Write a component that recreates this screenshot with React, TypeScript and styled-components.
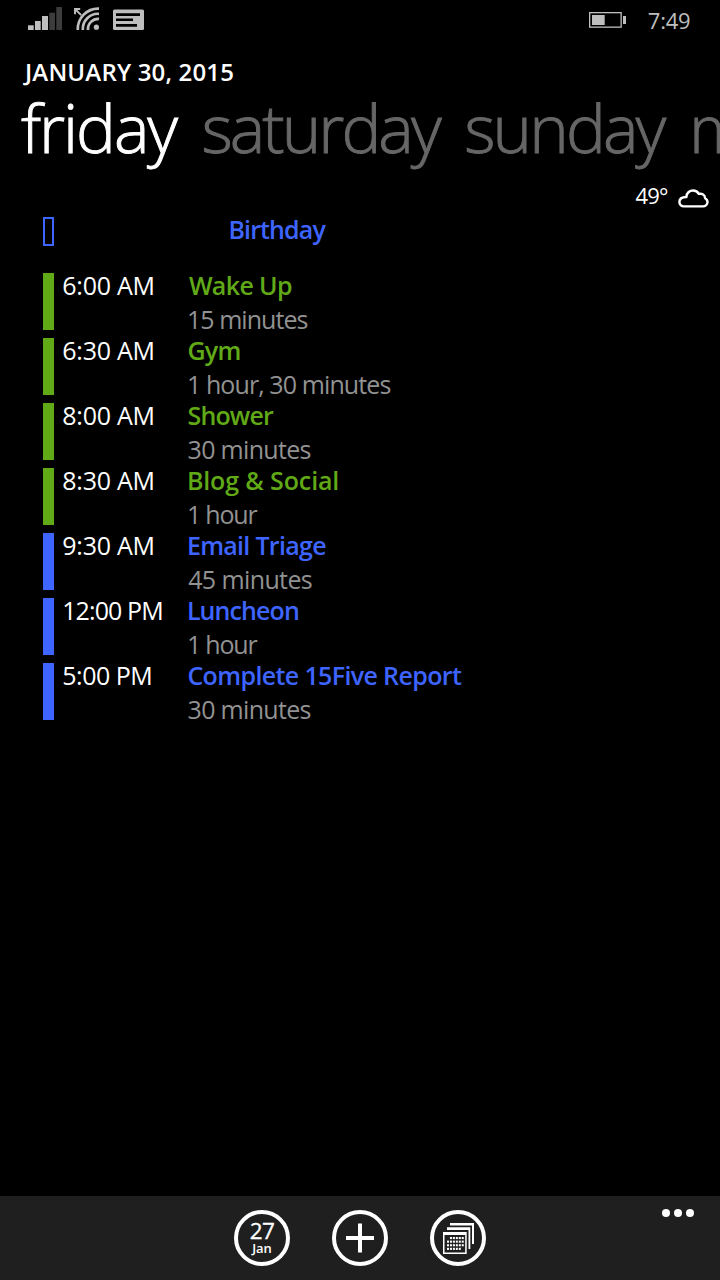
import React from "react";
import styled, { createGlobalStyle } from "styled-components";

const GREEN = "#60a917";
const BLUE = "#3e65ff";
const STATUS = "#bebebe";

const GlobalStyle = createGlobalStyle`
  * { box-sizing: border-box; }
  body {
    margin: 0;
    background: #000;
    color: #fff;
    font-family: "Open Sans", "Noto Sans", sans-serif;
  }
`;

const Screen = styled.div`
  width: 720px;
  height: 1280px;
  display: flex;
  flex-direction: column;
  overflow: hidden;
  background: #000;
`;

const StatusBar = styled.header`
  display: flex;
  justify-content: space-between;
  height: 40px;
  padding: 0 29.5px 0 28px;
  color: ${STATUS};
`;

const StatusGroup = styled.div<{ $gap: number }>`
  display: flex;
  gap: ${(p) => p.$gap}px;
  svg { display: block; }
`;

const Clock = styled.span`
  font-size: 22px;
  line-height: 40px;
  letter-spacing: -0.2px;
`;

const DateLine = styled.div`
  margin-top: 16px;
  padding-left: 25px;
  font-size: 24px;
  font-weight: 600;
  line-height: 31px;
  letter-spacing: 0.17px;
`;

const Days = styled.nav`
  display: flex;
  gap: 25.5px;
  height: 80px;
  padding-left: 21px;
`;

const Day = styled.span<{ $active?: boolean; $tracking: number }>`
  flex: none;
  font-size: 67px;
  font-weight: 300;
  line-height: 80px;
  white-space: nowrap;
  letter-spacing: ${(p) => p.$tracking}px;
  color: ${(p) => (p.$active ? "#fff" : "#666")};
  -webkit-text-stroke: 0.9px ${(p) => (p.$active ? "#fff" : "#666")};
`;

const Weather = styled.div`
  display: flex;
  justify-content: flex-end;
  gap: 10.5px;
  height: 31px;
  margin-top: 13px;
  padding-right: 11px;
  font-size: 22px;
  line-height: 31px;
  letter-spacing: -0.83px;
  svg { display: block; margin-top: 9px; }
`;

const AllDay = styled.div`
  display: flex;
  height: 35px;
  margin-top: 1px;
  padding-left: 43px;
  color: ${BLUE};
`;

const AllDayGlyph = styled.span`
  width: 11px;
  height: 29px;
  margin: 5px 174.5px 0 0;
  border: 2px solid ${BLUE};
`;

const Agenda = styled.main`
  flex: 1;
  display: flex;
  flex-direction: column;
  gap: 8px;
  padding: 26px 0 0 43px;
`;

const EventRow = styled.div`
  display: grid;
  grid-template-columns: 11px 132.5px 1fr;
  grid-template-rows: 57px;
  height: 57px;
`;

const Stripe = styled.span<{ $color: string }>`
  background: ${(p) => p.$color};
`;

const Line = styled.div<{ $tracking: number; $indent?: number }>`
  padding-left: ${(p) => p.$indent ?? 0}px;
  font-size: 25px;
  line-height: 34px;
  white-space: nowrap;
  letter-spacing: ${(p) => p.$tracking}px;
`;

const Time = styled(Line)`
  margin-top: -5px;
`;

const Details = styled.div`
  margin-top: -5px;
`;

const Title = styled(Line)<{ $color: string }>`
  font-weight: 600;
  color: ${(p) => p.$color};
`;

const Duration = styled(Line)`
  color: #929292;
`;

const AppBar = styled.footer`
  display: grid;
  grid-template-columns: 1fr auto 1fr;
  height: 84px;
  background: #1f1f1f;
`;

const Actions = styled.div`
  grid-column: 2;
  display: flex;
  gap: 42px;
  padding-top: 14px;
`;

const RoundButton = styled.button`
  display: flex;
  flex-direction: column;
  align-items: center;
  justify-content: center;
  width: 56px;
  height: 56px;
  padding: 0;
  border: 4px solid #fff;
  border-radius: 50%;
  background: transparent;
  color: #fff;
  font-family: inherit;
  svg { display: block; }
`;

const TodayNumber = styled.span`
  margin-top: -2px;
  font-size: 22.5px;
  line-height: 23px;
  letter-spacing: -0.6px;
  -webkit-text-stroke: 0.3px #fff;
`;

const TodayMonth = styled.span`
  font-size: 13px;
  font-weight: 600;
  line-height: 13px;
`;

const More = styled.button`
  display: flex;
  justify-self: end;
  gap: 4px;
  height: 34px;
  padding: 13px 26.5px 0 0;
  border: 0;
  background: transparent;
`;

const Dot = styled.span`
  width: 8px;
  height: 8px;
  border-radius: 50%;
  background: #fff;
`;

type EventItem = {
  time: string;
  timeTracking: number;
  timeIndent: number;
  title: string;
  titleTracking: number;
  titleIndent: number;
  duration: string;
  durationTracking: number;
  durationIndent: number;
  color: string;
};

const event = (
  time: [string, number, number],
  title: [string, number, number],
  duration: [string, number, number],
  color: string
): EventItem => ({
  time: time[0], timeTracking: time[1], timeIndent: time[2],
  title: title[0], titleTracking: title[1], titleIndent: title[2],
  duration: duration[0], durationTracking: duration[1], durationIndent: duration[2],
  color,
});

const events: EventItem[] = [
  event(["6:00 AM", -0.25, 8.3], ["Wake Up", -0.65, 2.4], ["15 minutes", -0.94, 0.4], GREEN),
  event(["6:30 AM", -0.25, 8.3], ["Gym", -0.75, 0.9], ["1 hour, 30 minutes", -0.9, 0.4], GREEN),
  event(["8:00 AM", -0.25, 8.3], ["Shower", -0.84, 1], ["30 minutes", -0.69, 1.1], GREEN),
  event(["8:30 AM", -0.25, 8.3], ["Blog & Social", -0.12, 0.4], ["1 hour", -1.18, 0.4], GREEN),
  event(["9:30 AM", -0.25, 8.3], ["Email Triage", -0.7, 0.4], ["45 minutes", -0.61, 1.7], BLUE),
  event(["12:00 PM", -0.9, 8.2], ["Luncheon", -0.9, 0.4], ["1 hour", -1.18, 0.4], BLUE),
  event(["5:00 PM", -0.5, 8.3], ["Complete 15Five Report", -0.63, 0.9], ["30 minutes", -0.69, 1.1], BLUE),
];

const SignalIcon = () => (
  <svg width="34" height="40" viewBox="28 0 34 40">
    <g fill={STATUS}>
      <rect x="28" y="25.3" width="5.7" height="4.7" />
      <rect x="35" y="21" width="5.7" height="9" />
      <rect x="42" y="16" width="6" height="14" />
    </g>
    <g fill="#3c3c3c">
      <rect x="49.3" y="12.7" width="5.7" height="17.3" />
      <rect x="56.3" y="7" width="5.7" height="23" />
    </g>
  </svg>
);

const WifiIcon = () => (
  <svg width="27" height="40" viewBox="74 0 27 40" fill="none" stroke={STATUS}>
    <path d="M77.8 30A20.4 20.4 0 0 1 99 8.6M82.8 30A15.3 15.3 0 0 1 99 13.8M88 30A10.3 10.3 0 0 1 99 18.9" strokeWidth="2.7" />
    <circle cx="96.4" cy="27.2" r="2.6" fill={STATUS} stroke="none" />
    <path d="M80.2 9H75V14.2M75 9l6.2 6.2" strokeWidth="1.9" />
  </svg>
);

const MessageIcon = () => (
  <svg width="31" height="40" viewBox="113 0 31 40">
    <rect x="113" y="9.5" width="31" height="20.5" rx="1.5" fill={STATUS} />
    <path d="M116 13.3h24V16h-24zM116 18.4h17V21h-17zM116 24h21v2.7h-21z" fill="#000" />
  </svg>
);

const BatteryIcon = () => (
  <svg width="37" height="40" viewBox="589 0 37 40">
    <rect x="589.65" y="12.65" width="31.5" height="14.5" fill="none" stroke={STATUS} strokeWidth="1.3" />
    <rect x="592" y="15" width="12.7" height="10" fill={STATUS} />
    <rect x="623" y="16" width="3" height="8" fill={STATUS} />
  </svg>
);

const CloudIcon = () => (
  <svg width="31" height="19" viewBox="0 0 31 19" fill="none" stroke="#fff" strokeWidth="2.4" strokeLinejoin="round">
    <path d="M6 17.4C3.2 17.4 1.4 15.3 1.4 12.9C1.4 10 4.2 8.1 8.4 8C8.4 4 11.6 1.5 15 1.5C17.6 1.5 19.7 2.7 20.8 4.9C24 4.2 27 5.8 27.1 9.2C28.8 10.1 29.5 11.6 29.5 13.1C29.5 15.6 27.4 17.4 25 17.4Z" />
  </svg>
);

const PlusIcon = () => (
  <svg width="30" height="30" viewBox="0 0 30 30" stroke="#fff" strokeWidth="4">
    <path d="M1 15H29M15 .5V29.5" />
  </svg>
);

const dotRows = [[1, 5], [0, 5], [0, 5], [0, 4]];

const CalendarIcon = () => (
  <svg width="48" height="48" viewBox="434 1214 48 48">
    <path d="M450 1223h24v21h-2v-18.5h-22z" fill="#fff" />
    <path d="M447 1227.3h23.3V1249h-1.8v-19h-21.5z" fill="#fff" />
    <path d="M443 1232h23.7v22H443z M444.5 1235v17.5h20.7V1235z" fill="#fff" fillRule="evenodd" />
    {dotRows.map(([from, to], row) =>
      Array.from({ length: to - from + 1 }, (_, i) => (
        <rect key={`${row}-${i}`} x={447 + (from + i) * 2.95} y={1237 + row * 3.6} width="2" height="2.1" fill="#fff" />
      ))
    )}
  </svg>
);

export default function App() {
  return (
    <Screen>
      <GlobalStyle />
      <StatusBar>
        <StatusGroup $gap={12}>
          <SignalIcon />
          <WifiIcon />
          <MessageIcon />
        </StatusGroup>
        <StatusGroup $gap={21.5}>
          <BatteryIcon />
          <Clock>7:49</Clock>
        </StatusGroup>
      </StatusBar>
      <DateLine>JANUARY 30, 2015</DateLine>
      <Days>
        <Day $active $tracking={-2.08}>friday</Day>
        <Day $tracking={-2.96}>saturday</Day>
        <Day $tracking={-2.86}>sunday</Day>
        <Day $tracking={-2.86}>monday</Day>
      </Days>
      <Weather>
        <span>49°</span>
        <CloudIcon />
      </Weather>
      <AllDay>
        <AllDayGlyph />
        <Title $tracking={-0.88} $color={BLUE}>Birthday</Title>
      </AllDay>
      <Agenda>
        {events.map((e) => (
          <EventRow key={e.time}>
            <Stripe $color={e.color} />
            <Time $tracking={e.timeTracking} $indent={e.timeIndent}>{e.time}</Time>
            <Details>
              <Title $tracking={e.titleTracking} $indent={e.titleIndent} $color={e.color}>{e.title}</Title>
              <Duration $tracking={e.durationTracking} $indent={e.durationIndent}>{e.duration}</Duration>
            </Details>
          </EventRow>
        ))}
      </Agenda>
      <AppBar>
        <Actions>
          <RoundButton>
            <TodayNumber>27</TodayNumber>
            <TodayMonth>Jan</TodayMonth>
          </RoundButton>
          <RoundButton><PlusIcon /></RoundButton>
          <RoundButton><CalendarIcon /></RoundButton>
        </Actions>
        <More>
          <Dot />
          <Dot />
          <Dot />
        </More>
      </AppBar>
    </Screen>
  );
}
